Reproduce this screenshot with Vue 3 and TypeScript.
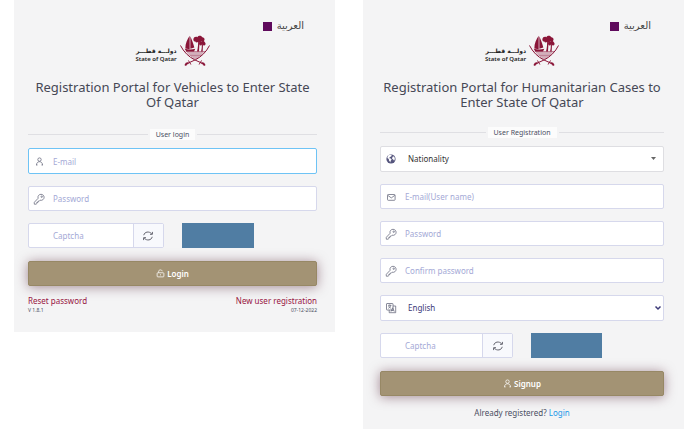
<script setup lang="ts">
import { ref } from 'vue'

interface TextField {
  id: string
  label: string
  type: string
  icon: string
  active?: boolean
}

interface Portal {
  id: string
  title: string
  legend: string
  fields: TextField[]
}

const portals: Portal[] = [
  {
    id: 'vehicles',
    title: 'Registration Portal for Vehicles to Enter State Of Qatar',
    legend: 'User login',
    fields: [
      { id: 'login-email', label: 'E-mail', type: 'email', icon: 'user', active: true },
      { id: 'login-password', label: 'Password', type: 'password', icon: 'key' },
    ],
  },
  {
    id: 'humanitarian',
    title: 'Registration Portal for Humanitarian Cases to Enter State Of Qatar',
    legend: 'User Registration',
    fields: [
      { id: 'signup-email', label: 'E-mail(User name)', type: 'email', icon: 'mail' },
      { id: 'signup-password', label: 'Password', type: 'password', icon: 'key' },
      { id: 'signup-confirm', label: 'Confirm password', type: 'password', icon: 'key' },
    ],
  },
]

const nationality = ref('Nationality')
const language = ref('English')
</script>

<template>
  <main class="page">
    <section v-for="portal in portals" :key="portal.id" class="card" :class="portal.id">
      <a href="#" class="language"><span class="swatch"></span><span lang="ar">العربية</span></a>

      <div class="logo">
        <div class="logo-text">
          <span class="logo-ar" lang="ar">دولـــة قطـــر</span>
          <span class="logo-en">State of Qatar</span>
        </div>
        <svg class="emblem" viewBox="0 0 90 92" aria-hidden="true">
          <g fill="#8a1538">
            <path d="M29 2C22 12 16 25 16 40l13 2zM31 3c4 10 9 21 12 34l-12 4z" />
            <path d="M14 41c10 3 22 3 32 0l-4 8H19z" />
            <path d="M40 12c1-7 8-9 12-6 4-7 13-5 15 0 5 0 8 5 6 9-1 5-6 4-9 3-3 4-8 3-9 1-3 4-8 3-9 0-4 0-6-3-6-7z" />
            <path d="M54 13h5l-2 36h-6c3-11 4-23 3-36z" />
            <path d="M57 25c0-6 5-8 8-6 4-3 9-1 10 3 3 3 2 8-2 9-3 0-5-2-7-3-3 4-8 4-9-3z" />
            <path d="M65 27h4l-1 22h-5c2-7 3-14 2-22z" />
          </g>
          <path d="M17 49h58M21 53h50M25 57h42M29 61h34M33 65h26M38 69h16" fill="none" stroke="#8a1538" stroke-width="2" opacity=".75" />
          <g fill="none" stroke="#8a1538" stroke-width="3" stroke-linecap="round">
            <path d="M2 32c9 18 24 33 42 42l24 11" />
            <path d="M88 32C79 50 64 65 46 74L22 85" />
            <path d="M64 77l-6 10M26 77l6 10" />
            <path d="M67 84c3 0 5 2 6 5M23 84c-3 0-5 2-6 5" stroke-width="6" />
          </g>
        </svg>
      </div>

      <h1>{{ portal.title }}</h1>

      <form @submit.prevent>
        <div class="legend"><span>{{ portal.legend }}</span></div>

        <div v-if="portal.id === 'humanitarian'" class="field choice neutral">
          <svg class="icon" viewBox="0 0 12 12" aria-hidden="true">
            <circle cx="6" cy="6" r="4.6" fill="#55557d" />
            <path d="M3 2.6l2-.8 1.8.5-.6 1.3-1.4.5-.5 1.2 1.6.3.7 1-1 1.4-.2 1.6-1.4-2.1-.2-1.6L2.3 5zM8 3.2l1.4.7.5 2-.8 1.9-.9-1.2-1.1-.8.2-1.4z" fill="#fff" />
          </svg>
          <select id="nationality" v-model="nationality" aria-label="Nationality">
            <option>Nationality</option>
          </select>
          <svg class="caret" viewBox="0 0 10 10" aria-hidden="true"><path d="M2 3h5L4.500 6z" fill="#666" /></svg>
        </div>

        <div v-for="field in portal.fields" :key="field.id" class="field" :class="{ active: field.active }">
          <label :for="field.id" :aria-label="field.label">
            <svg v-if="field.icon === 'user'" class="icon" viewBox="0 0 12 12" aria-hidden="true">
              <g class="line"><circle cx="6.500" cy="4.600" r="1.700" /><path d="M3.500 10c0-4.400 6-4.400 6 0M3 10h1.500M8.500 10H10" /></g>
            </svg>
            <svg v-else-if="field.icon === 'mail'" class="icon" viewBox="0 0 12 12" aria-hidden="true">
              <g class="line"><rect x="2.500" y="3.500" width="7.600" height="5.800" rx=".8" /><path d="M2.700 4.300l3.600 2.600 3.600-2.600" /></g>
            </svg>
            <svg v-else class="icon" viewBox="0 0 12 12" aria-hidden="true">
              <g class="line"><path d="M5.100 5.300C4.400 2.800 6.200 1.300 8 1.300c1.800 0 3.100 1.400 3.100 3 0 2-1.900 3.500-4 2.900l-.9 1H5v1.200H3.800v1.200l-.7.6H1.300V9.300z" /><circle cx="8.700" cy="3.700" r=".7" /></g>
            </svg>
          </label>
          <input :id="field.id" :type="field.type" :placeholder="field.label" />
        </div>

        <div v-if="portal.id === 'humanitarian'" class="field choice">
          <svg class="icon" viewBox="0 0 12 12" aria-hidden="true">
            <g class="line"><rect x="1.500" y="1.500" width="6.500" height="6.500" rx=".5" /><path d="M8 4h2.700v6.700H4.200V8M3 3.300h3.400M4.700 2.500v.8M3.300 6.300c1.500-.7 2.200-1.600 2.400-3M3.600 4c.5 1.200 1.300 1.800 2.300 2.200M6 9.600l1.600-3.800 1.700 3.800M6.600 8.500h2" /></g>
          </svg>
          <select id="language" v-model="language" aria-label="Language">
            <option>English</option>
            <option>العربية</option>
          </select>
          <svg class="caret end" viewBox="0 0 10 10" aria-hidden="true"><path d="M2.500 3.500L5 6l2.500-2.500" fill="none" stroke="#3c3a78" stroke-width="1.500" /></svg>
        </div>

        <div class="captcha-row">
          <div class="captcha-group">
            <input :id="portal.id + '-captcha'" type="text" placeholder="Captcha" aria-label="Captcha" />
            <button type="button" class="refresh" aria-label="Refresh captcha">
              <svg class="icon" viewBox="0 0 12 12" aria-hidden="true">
                <g fill="none" stroke="#555560" stroke-width=".9"><path d="M1.800 5.200C2.400 1.700 7.200.9 9.700 3.800M10.200 6.800C9.600 10.300 4.800 11.100 2.300 8.200" /><path d="M10.400 1.900v2.400H8M1.600 10.100V7.700H4" /></g>
              </svg>
            </button>
          </div>
          <div class="captcha-image"></div>
        </div>

        <button type="submit" class="submit">
          <svg v-if="portal.id === 'vehicles'" viewBox="0 0 12 12" aria-hidden="true">
            <rect x="1.500" y="5" width="9" height="5.500" rx="1" /><path d="M3.500 5V3.500c0-3 4.500-3 4.800-.5M6 7v1.500" />
          </svg>
          <svg v-else viewBox="0 0 12 12" aria-hidden="true">
            <circle cx="6" cy="3.500" r="2.300" /><path d="M2 10.500c0-5.500 8-5.500 8 0M1.500 10.500h2M8.500 10.500h2" />
          </svg>
          {{ portal.id === 'vehicles' ? 'Login' : 'Signup' }}
        </button>
      </form>

      <footer v-if="portal.id === 'vehicles'">
        <div class="links"><a href="#">Reset password</a><a href="#">New user registration</a></div>
        <div class="version"><span>V 1.8.1</span><span>07-12-2022</span></div>
      </footer>
      <p v-else class="already">Already registered? <a href="#">Login</a></p>
    </section>
  </main>
</template>

<style>
body {
  background: #fff;
}
</style>

<style scoped>
* {
  box-sizing: border-box;
}

.page {
  display: grid;
  grid-template-columns: 1fr 1fr;
  gap: 28px;
  align-items: start;
  padding: 0 16px 0 14px;
  font-family: "Noto Sans", "DejaVu Sans", sans-serif;
  font-size: 8px;
  line-height: 12px;
  color: #4b4f63;
}

.card {
  padding: 20px 18px 18px 14px;
  background: #f4f4f5;
}

.humanitarian {
  padding: 20px 20px 10px 17px;
}

a {
  text-decoration: none;
}

.language {
  display: flex;
  align-items: center;
  justify-content: flex-end;
  gap: 5px;
  padding-right: 13px;
  font-family: "DejaVu Sans", sans-serif;
  font-size: 10px;
  color: #444;
}

.swatch {
  width: 9px;
  height: 9px;
  background: #5f0a5c;
}

.logo {
  display: flex;
  align-items: center;
  justify-content: center;
  gap: 3px;
  margin-top: 3px;
}

.logo-text {
  display: flex;
  flex-direction: column;
  align-items: flex-end;
  padding-top: 8px;
  font-size: 6px;
  line-height: 8px;
  color: #222;
}

.logo-ar {
  font-family: "DejaVu Sans", sans-serif;
  font-weight: 700;
}

.logo-en {
  font-weight: 600;
}

.emblem {
  width: 30px;
  height: 31px;
}

h1 {
  margin: 14px 0 0;
  font-size: 13px;
  font-weight: 400;
  line-height: 15px;
  text-align: center;
  color: #464855;
}

form {
  display: flex;
  flex-direction: column;
  gap: 12px;
  margin-top: 19px;
}

.humanitarian form {
  margin-top: 17px;
}

.legend {
  display: flex;
  align-items: center;
  gap: 2px;
  margin-bottom: -4px;
  font-size: 7px;
  line-height: 11px;
}

.legend::before,
.legend::after {
  content: "";
  flex: 1;
  height: 1px;
  background: #dfdfe3;
}

.legend span {
  padding: 0 6px;
  background: #fcfcfc;
}

.field {
  display: grid;
  grid-template-columns: 24px 1fr;
  align-items: center;
  height: 25px;
  border: 1px solid #d6d8ec;
  border-radius: 2px;
  background: #fff;
}

.field.active {
  height: 26px;
  border-color: #6ec3f5;
}

.field.neutral {
  border-color: #dedee2;
}

.field label {
  display: flex;
}

.icon {
  display: block;
  width: 12px;
  height: 12px;
  margin-left: 4px;
}

.line {
  fill: none;
  stroke: #6b6d80;
  stroke-width: 0.800;
}

input,
select,
button {
  min-width: 0;
  margin: 0;
  padding: 0;
  border: 0;
  outline: 0;
  background: none;
  font: inherit;
  color: #3c3a78;
}

.field input {
  width: 100%;
  height: 100%;
}

input::placeholder {
  color: #a4a9d6;
  opacity: 1;
}

.choice {
  grid-template-columns: 24px 1fr 14px;
  height: 26px;
}

.choice > * {
  grid-row: 1;
}

.choice .icon,
.caret {
  z-index: 1;
  pointer-events: none;
}

.choice .icon {
  grid-column: 1;
}

.choice select {
  grid-column: 1 / -1;
  width: 100%;
  height: 100%;
  padding-left: 27px;
  appearance: none;
}

.choice.neutral select {
  color: #333;
}

.caret {
  grid-column: 3;
  width: 10px;
  height: 10px;
}

.caret.end {
  justify-self: end;
}

.captcha-row {
  display: flex;
  gap: 18px;
  height: 26px;
}

.captcha-group {
  display: flex;
  width: 47%;
  height: 25px;
  border: 1px solid #d6d8ec;
  border-radius: 2px;
  background: #fff;
}

.captcha-group input {
  flex: 1;
  padding-left: 24px;
}

.refresh {
  width: 30px;
  border-left: 1px solid #d6d8ec;
  background: #f8f9fd;
}

.refresh .icon {
  margin: 0 auto;
}

.captcha-image {
  width: 25%;
  height: 25px;
  background: #507da3;
}

.submit {
  display: flex;
  align-items: center;
  justify-content: center;
  gap: 2px;
  height: 25px;
  border: 1px solid #978865;
  border-radius: 2px;
  background: #a39374;
  box-shadow: 0 1px 12px rgba(82, 30, 50, 0.500);
  font-weight: 600;
  color: #fff;
}

.submit svg {
  width: 9px;
  height: 9px;
  fill: none;
  stroke: #fff;
}

footer {
  margin-top: 9px;
}

.links,
.version {
  display: flex;
  justify-content: space-between;
}

.links a {
  color: #97133f;
}

.version {
  font-size: 5px;
  line-height: 7px;
}

.already {
  margin: 11px 0 0;
  text-align: center;
}

.already a {
  color: #1b98e8;
}
</style>
